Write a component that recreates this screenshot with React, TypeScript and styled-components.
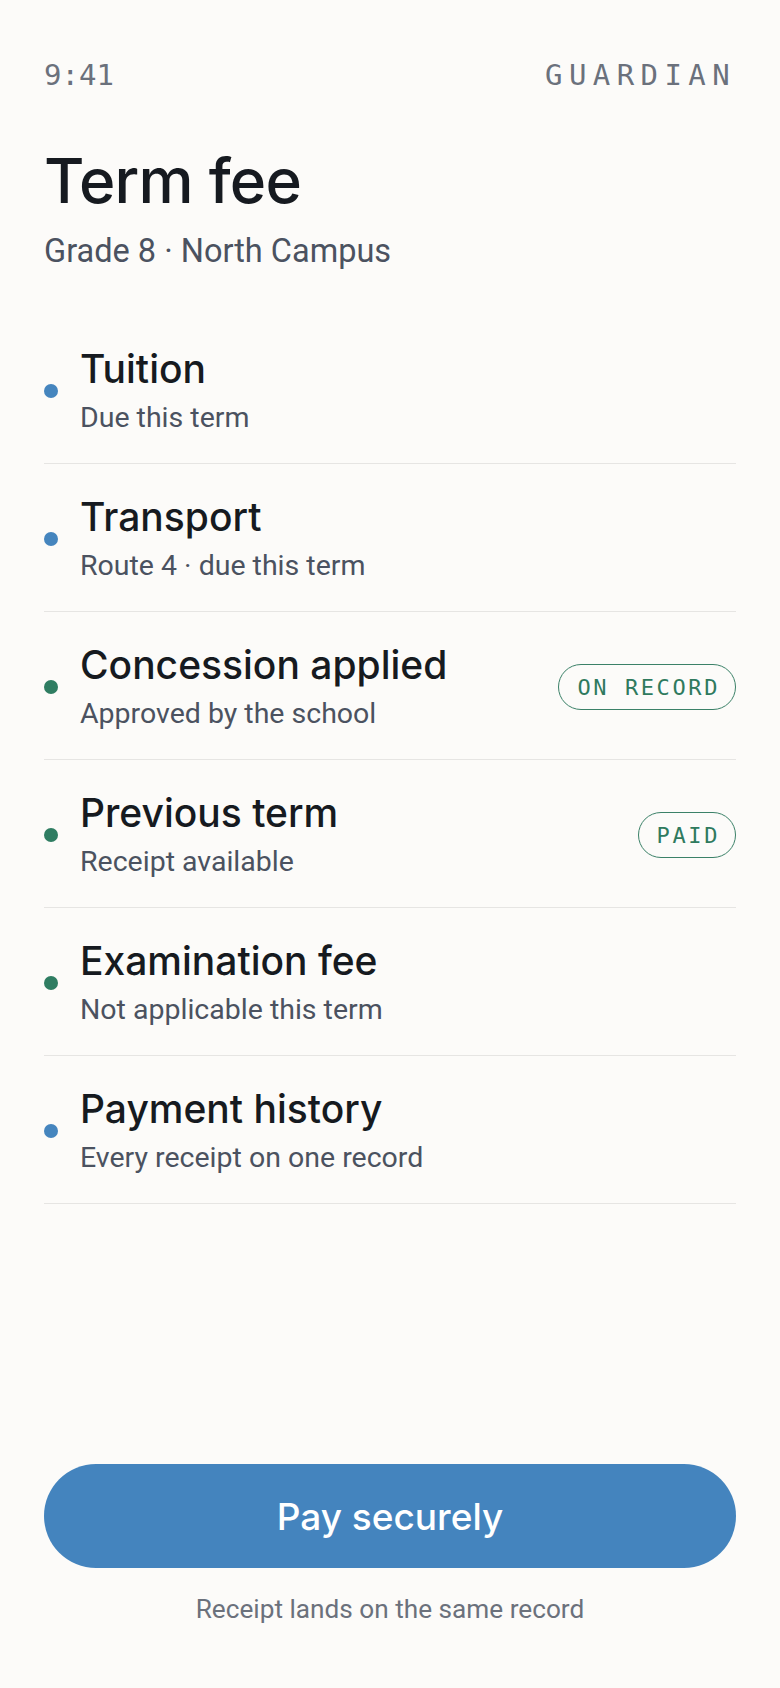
import React from "react";
import styled, { createGlobalStyle } from "styled-components";

const GlobalStyle = createGlobalStyle`
  html, body {
    margin: 0;
    padding: 0;
    background: #fcfbf9;
  }
  * {
    box-sizing: border-box;
  }
`;

const Page = styled.div`
  min-height: 100vh;
  display: flex;
  flex-direction: column;
  padding: 58px 44px 63px;
  background: #fcfbf9;
  color: #161a20;
`;

const StatusBar = styled.div`
  display: flex;
  justify-content: space-between;
  align-items: center;
  font-family: "DejaVu Sans Mono", "Liberation Mono", monospace;
  font-size: 29px;
  line-height: 34px;
  color: #6b717c;
`;

const Brand = styled.span`
  letter-spacing: 6.4px;
`;

const Title = styled.h1`
  margin: 55px 0 0;
  font-family: Inter, "Noto Sans", sans-serif;
  font-weight: 500;
  font-size: 62px;
  line-height: 68px;
  letter-spacing: -0.012em;
  color: #161a20;
`;

const Subtitle = styled.div`
  margin-top: 16px;
  font-family: Roboto, "Noto Sans", sans-serif;
  font-size: 32.5px;
  line-height: 40px;
  color: #4b5260;
`;

const List = styled.ul`
  list-style: none;
  margin: 45px 0 0;
  padding: 0;
`;

const Row = styled.li`
  display: flex;
  align-items: center;
  gap: 22px;
  padding: 30px 0 27px;
  border-bottom: 1px solid #e6e5e3;
`;

const Dot = styled.span<{ $tone: "blue" | "green" }>`
  flex: none;
  width: 14px;
  height: 14px;
  border-radius: 50%;
  background: ${(p) => (p.$tone === "green" ? "#2f7d62" : "#4585be")};
`;

const Text = styled.div`
  display: flex;
  flex-direction: column;
  gap: 8px;
  min-width: 0;
`;

const RowTitle = styled.div`
  font-family: Inter, "Noto Sans", sans-serif;
  font-weight: 500;
  font-size: 39px;
  line-height: 46px;
  letter-spacing: 0;
  color: #161a20;
`;

const RowSub = styled.div`
  font-family: Roboto, "Noto Sans", sans-serif;
  font-size: 28.5px;
  line-height: 36px;
  color: #4b5260;
`;

const Badge = styled.span`
  margin-left: auto;
  flex: none;
  height: 46px;
  display: inline-flex;
  align-items: center;
  padding: 0 15px 0 18px;
  border: 1.5px solid #3b8168;
  border-radius: 23px;
  font-family: "DejaVu Sans Mono", "Liberation Mono", monospace;
  font-size: 22px;
  letter-spacing: 2.6px;
  color: #2f7a5e;
`;

const Spacer = styled.div`
  flex: 1;
`;

const Footer = styled.div`
  display: flex;
  flex-direction: column;
  align-items: center;
  gap: 25px;
`;

const PayButton = styled.button`
  width: 100%;
  height: 104px;
  border: none;
  border-radius: 52px;
  background: #4484be;
  color: #ffffff;
  font-family: Inter, "Noto Sans", sans-serif;
  font-weight: 500;
  font-size: 37px;
  cursor: pointer;
`;

const Caption = styled.div`
  font-family: Roboto, "Noto Sans", sans-serif;
  font-size: 26.2px;
  line-height: 32px;
  color: #6b717c;
`;

type Item = {
  title: string;
  sub: string;
  tone: "blue" | "green";
  badge?: string;
};

const items: Item[] = [
  { title: "Tuition", sub: "Due this term", tone: "blue" },
  { title: "Transport", sub: "Route 4 · due this term", tone: "blue" },
  {
    title: "Concession applied",
    sub: "Approved by the school",
    tone: "green",
    badge: "ON RECORD",
  },
  { title: "Previous term", sub: "Receipt available", tone: "green", badge: "PAID" },
  { title: "Examination fee", sub: "Not applicable this term", tone: "green" },
  { title: "Payment history", sub: "Every receipt on one record", tone: "blue" },
];

export default function App() {
  return (
    <>
      <GlobalStyle />
      <Page>
        <StatusBar>
          <span>9:41</span>
          <Brand>GUARDIAN</Brand>
        </StatusBar>
        <Title>Term fee</Title>
        <Subtitle>Grade 8 · North Campus</Subtitle>
        <List>
          {items.map((item) => (
            <Row key={item.title}>
              <Dot $tone={item.tone} />
              <Text>
                <RowTitle>{item.title}</RowTitle>
                <RowSub>{item.sub}</RowSub>
              </Text>
              {item.badge && <Badge>{item.badge}</Badge>}
            </Row>
          ))}
        </List>
        <Spacer />
        <Footer>
          <PayButton>Pay securely</PayButton>
          <Caption>Receipt lands on the same record</Caption>
        </Footer>
      </Page>
    </>
  );
}
